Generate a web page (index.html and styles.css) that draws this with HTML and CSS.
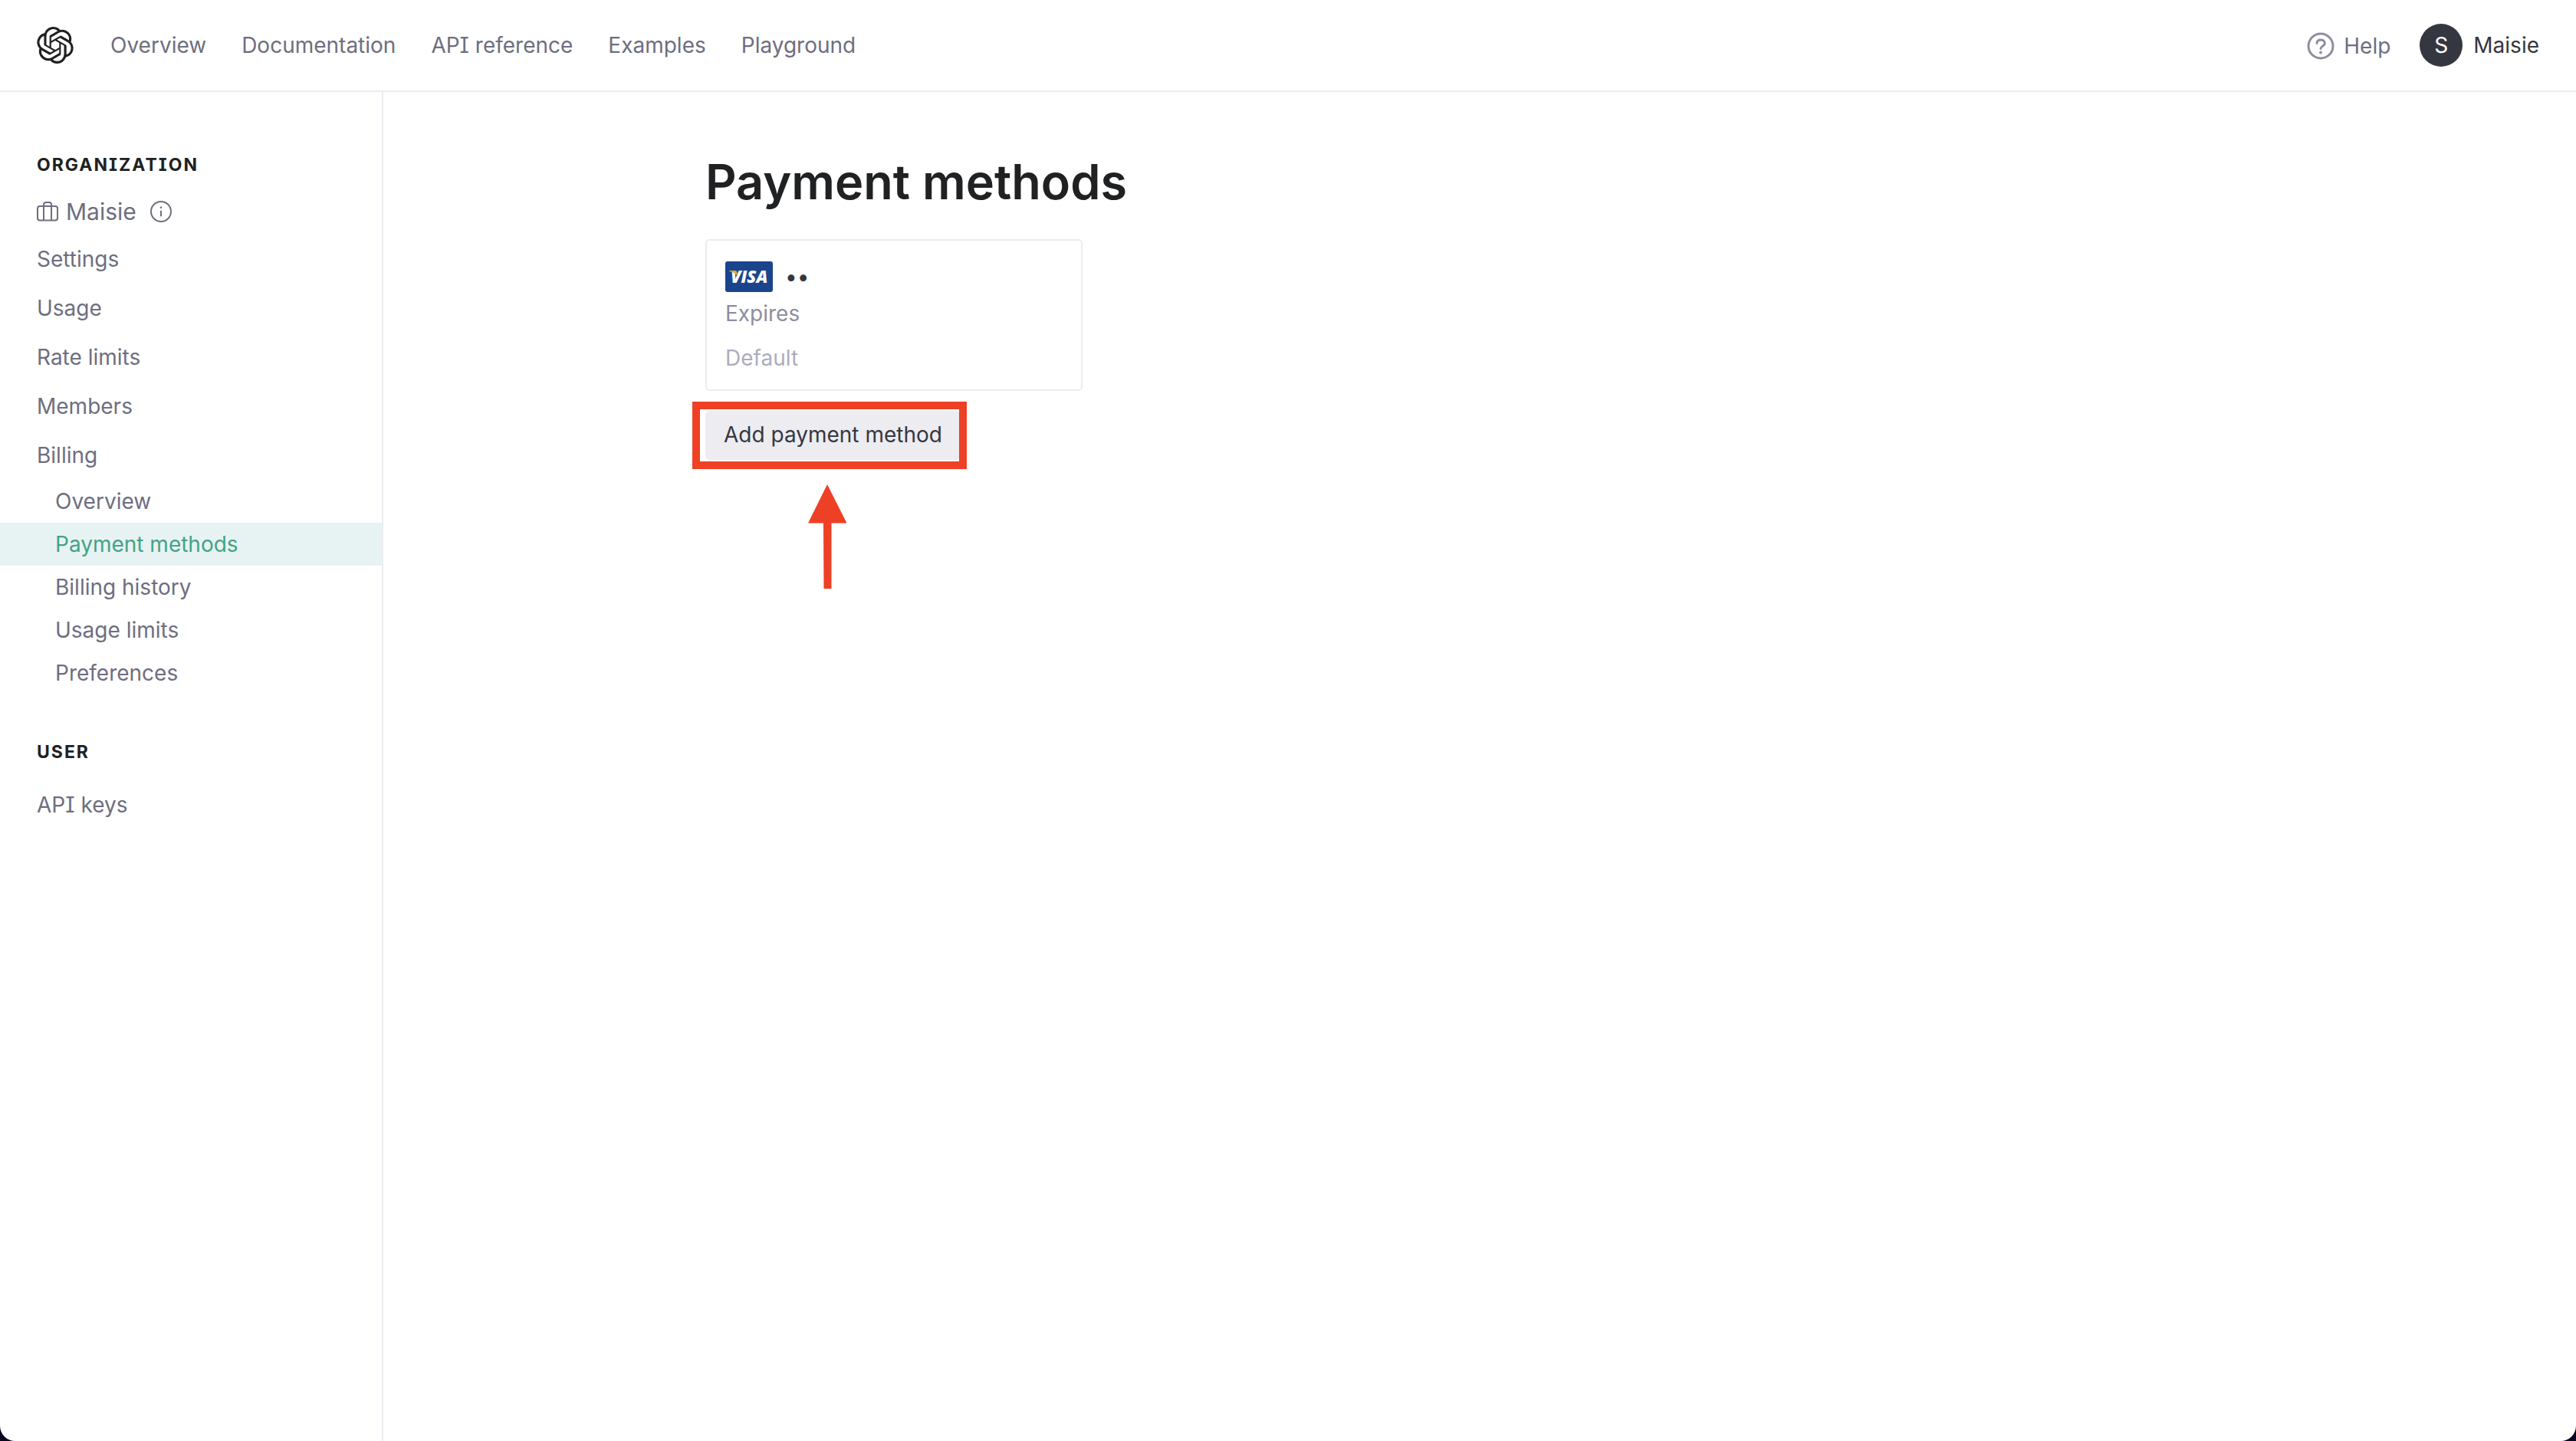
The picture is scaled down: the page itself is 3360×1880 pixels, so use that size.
FILE: index.html
```html
<!DOCTYPE html>
<html lang="en">
<head>
<meta charset="utf-8">
<meta name="viewport" content="width=device-width, initial-scale=1">
<title>Payment methods</title>
<link rel="stylesheet" href="styles.css">
</head>
<body>
<div class="window">
  <header class="topbar">
    <a class="logo" href="#" aria-label="Home">
      <svg class="logo-mark" viewBox="0 0 24 24" fill="currentColor" aria-hidden="true"><path d="M22.2819 9.8211a5.9847 5.9847 0 0 0-.5157-4.9108 6.0462 6.0462 0 0 0-6.5098-2.9A6.0651 6.0651 0 0 0 4.9807 4.1818a5.9847 5.9847 0 0 0-3.9977 2.9 6.0462 6.0462 0 0 0 .7427 7.0966 5.98 5.98 0 0 0 .511 4.9107 6.051 6.051 0 0 0 6.5146 2.9001A5.9847 5.9847 0 0 0 13.2599 24a6.0557 6.0557 0 0 0 5.7718-4.2058 5.9894 5.9894 0 0 0 3.9977-2.9001 6.0557 6.0557 0 0 0-.7475-7.0729zm-9.022 12.6081a4.4755 4.4755 0 0 1-2.8764-1.0408l.1419-.0804 4.7783-2.7582a.7948.7948 0 0 0 .3927-.6813v-6.7369l2.02 1.1686a.071.071 0 0 1 .038.052v5.5826a4.504 4.504 0 0 1-4.4945 4.4944zm-9.6607-4.1254a4.4708 4.4708 0 0 1-.5346-3.0137l.142.0852 4.783 2.7582a.7712.7712 0 0 0 .7806 0l5.8428-3.3685v2.3324a.0804.0804 0 0 1-.0332.0615L9.74 19.9502a4.4992 4.4992 0 0 1-6.1408-1.6464zM2.3408 7.8956a4.485 4.485 0 0 1 2.3655-1.9728V11.6a.7664.7664 0 0 0 .3879.6765l5.8144 3.3543-2.0201 1.1685a.0757.0757 0 0 1-.071 0l-4.8303-2.7865A4.504 4.504 0 0 1 2.3408 7.872zm16.5963 3.8558L13.1038 8.364 15.1192 7.2a.0757.0757 0 0 1 .071 0l4.8303 2.7913a4.4944 4.4944 0 0 1-.6765 8.1042v-5.6772a.79.79 0 0 0-.407-.667zm2.0107-3.0231l-.142-.0852-4.7735-2.7818a.7759.7759 0 0 0-.7854 0L9.409 9.2297V6.8974a.0662.0662 0 0 1 .0284-.0615l4.8303-2.7866a4.4992 4.4992 0 0 1 6.6802 4.66zM8.3065 12.863l-2.02-1.1638a.0804.0804 0 0 1-.038-.0567V6.0742a4.4992 4.4992 0 0 1 7.3757-3.4537l-.142.0805L8.704 5.459a.7948.7948 0 0 0-.3927.6813zm1.0976-2.3654l2.602-1.4998 2.6069 1.4998v2.9994l-2.5974 1.4997-2.6067-1.4997Z"/></svg>
    </a>
    <nav class="topnav" aria-label="Main">
      <a href="#">Overview</a>
      <a href="#">Documentation</a>
      <a href="#">API reference</a>
      <a href="#">Examples</a>
      <a href="#">Playground</a>
    </nav>
    <div class="account">
      <a class="help" href="#">
        <svg class="help-icon" viewBox="0 0 36 36" fill="none" stroke="currentColor" stroke-width="3" stroke-linecap="round" aria-hidden="true"><circle cx="18" cy="18" r="16"/><path d="M13 14.500c.2-3 2.200-4.500 5-4.500 3 0 5.300 1.700 5.300 4.300 0 4-5.300 3.700-5.300 7.200"/><circle cx="18" cy="26.500" r="1.900" fill="currentColor" stroke="none"/></svg>
        Help
      </a>
      <button class="profile" type="button">
        <span class="avatar">S</span>
        Maisie
      </button>
    </div>
  </header>

  <div class="layout">
    <aside class="sidebar">
      <h2 class="section-title">Organization</h2>
      <div class="org">
        <svg class="org-icon" viewBox="0 0 28 28" fill="none" stroke="currentColor" stroke-width="2" stroke-linejoin="round" aria-hidden="true"><rect x="1" y="7" width="26" height="18.500" rx="3"/><path d="M9 25.500V5a3 3 0 0 1 3-3h4a3 3 0 0 1 3 3v20.500"/></svg>
        <span class="org-name">Maisie</span>
        <svg class="info-icon" viewBox="0 0 28 28" fill="none" stroke="currentColor" stroke-width="2" stroke-linecap="round" aria-hidden="true"><circle cx="14" cy="14" r="13"/><path d="M14 13.500v6"/><circle cx="14" cy="8.800" r="1.300" fill="currentColor" stroke="none"/></svg>
      </div>
      <nav class="menu" aria-label="Organization">
        <a class="item" href="#">Settings</a>
        <a class="item" href="#">Usage</a>
        <a class="item" href="#">Rate limits</a>
        <a class="item" href="#">Members</a>
        <a class="item" href="#">Billing</a>
        <a class="item sub" href="#">Overview</a>
        <a class="item sub active" href="#" aria-current="page">Payment methods</a>
        <a class="item sub" href="#">Billing history</a>
        <a class="item sub" href="#">Usage limits</a>
        <a class="item sub" href="#">Preferences</a>
      </nav>
      <h2 class="section-title user-title">User</h2>
      <nav class="menu" aria-label="User">
        <a class="item" href="#">API keys</a>
      </nav>
    </aside>

    <main class="main">
      <div class="content">
        <h1 class="title">Payment methods</h1>
        <section class="card">
          <div class="card-head">
            <svg class="visa" viewBox="0 0 62 40" role="img" aria-label="Visa">
              <rect width="62" height="40" rx="3" fill="#1a458d"/>
              <text class="visa-text" x="7" y="28">VISA</text>
              <path d="M5 12h8q2 0 2.300 2l1 5.500Q13 14.500 5 12.800z" fill="#e8a634"/>
            </svg>
            <span class="dots">••</span>
          </div>
          <p class="expires">Expires</p>
          <p class="default">Default</p>
        </section>
        <div class="add">
          <button class="add-button" type="button">Add payment method</button>
          <span class="highlight"></span>
          <svg class="arrow" viewBox="0 0 50 136" fill="#ee4025" aria-hidden="true"><path d="M25 0l25.500 50.500H30.500V136H20.500L20 50.500H0z"/></svg>
        </div>
      </div>
    </main>
  </div>
</div>
</body>
</html>
```
FILE: styles.css
```css
* {
  box-sizing: border-box;
}

body {
  margin: 0;
  background: #0b0420;
  color: #353740;
  font-family: Inter, "Liberation Sans", sans-serif;
  font-size: 28px;
  line-height: 40px;
  font-feature-settings: "cv08";
}

a {
  color: inherit;
  text-decoration: none;
}

button {
  border: 0;
  font: inherit;
  font-feature-settings: inherit;
  color: inherit;
  cursor: pointer;
}

h1, h2, p {
  margin: 0;
}

svg {
  display: block;
  flex: none;
}

.window {
  display: flex;
  flex-direction: column;
  min-height: 100vh;
  background: #fff;
  border-radius: 0 0 20px 20px;
  overflow: hidden;
}

.topbar {
  display: flex;
  align-items: center;
  height: 120px;
  padding: 0 48px;
  border-bottom: 2px solid #ececf1;
}

.logo {
  color: #202123;
}

.logo-mark {
  width: 48px;
  height: 48px;
}

.topnav {
  display: flex;
  gap: 46px;
  margin-left: 48px;
  color: #6e6e80;
}

.account {
  display: flex;
  align-items: center;
  gap: 38px;
  margin-left: auto;
}

.help {
  display: flex;
  align-items: center;
  gap: 12px;
  padding-top: 2px;
  color: #6e6e80;
}

.help-icon {
  width: 36px;
  height: 36px;
  color: #8e8ea0;
}

.profile {
  display: flex;
  align-items: center;
  gap: 14px;
  padding: 0;
  background: none;
}

.avatar {
  display: grid;
  place-items: center;
  width: 56px;
  height: 56px;
  border-radius: 50%;
  background: #353740;
  color: #fff;
}

.layout {
  display: flex;
  flex: 1;
}

.sidebar {
  flex: none;
  width: 500px;
  padding-top: 78px;
  border-right: 2px solid #ececf1;
  color: #6e6e80;
}

.section-title {
  padding: 0 48px;
  color: #202123;
  font-size: 23px;
  font-weight: 700;
  line-height: 34px;
  letter-spacing: 2px;
  text-transform: uppercase;
}

.org {
  display: flex;
  align-items: center;
  padding: 24px 48px 10px;
}

.org-icon,
.info-icon {
  width: 28px;
  height: 28px;
}

.org-name {
  margin: 0 18px 0 10px;
  font-size: 30px;
}

.menu {
  display: flex;
  flex-direction: column;
}

.item {
  padding: 0 48px;
  line-height: 64px;
}

.sub {
  padding-left: 72px;
  line-height: 56px;
}

.active {
  background: #e7f3f3;
  color: #44a285;
}

.user-title {
  margin: 58px 0 20px;
}

.main {
  flex: 1;
  padding: 80px 48px;
}

.content {
  max-width: 2020px;
  margin: 0 auto;
}

.title {
  color: #202123;
  font-size: 63px;
  font-weight: 600;
  line-height: 74px;
}

.card {
  width: 492px;
  height: 198px;
  margin-top: 38px;
  padding: 27px 24px;
  border: 2px solid #ececf1;
  border-radius: 6px;
}

.card-head {
  display: flex;
  align-items: center;
  gap: 16px;
  margin-bottom: 8px;
}

.visa {
  width: 62px;
  height: 40px;
}

.visa-text {
  fill: #fff;
  font-family: "Open Sans", sans-serif;
  font-size: 22px;
  font-style: italic;
  font-weight: 800;
}

.expires {
  color: #8e8ea0;
}

.default {
  margin-top: 18px;
  color: #acacbe;
}

.add {
  position: relative;
  width: fit-content;
  margin-top: 26px;
}

.add-button {
  display: block;
  padding: 11px 24px 13px;
  border-radius: 6px;
  background: #ececf1;
}

.highlight {
  position: absolute;
  inset: -12px -8px -12px -17px;
  border: 10px solid #ee4025;
  pointer-events: none;
}

.arrow {
  position: absolute;
  top: 96px;
  left: 134px;
  width: 50px;
  height: 136px;
}
```
